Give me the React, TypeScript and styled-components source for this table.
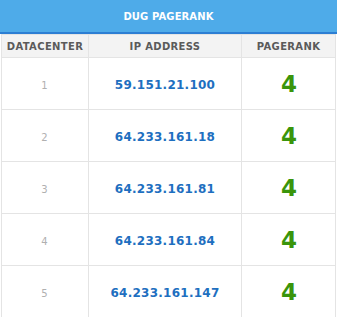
import React from "react";
import styled, { createGlobalStyle } from "styled-components";

const Global = createGlobalStyle`
  html, body { margin: 0; padding: 0; background: #ffffff; }
  body { font-family: "DejaVu Sans", Verdana, sans-serif; }
`;

const Wrap = styled.div`
  width: 337px;
  display: flex;
  flex-direction: column;
`;

const Title = styled.div`
  height: 32px;
  line-height: 33px;
  background: #4eabe9;
  border-bottom: 2px solid #2c7ed3;
  color: #ffffff;
  font-weight: bold;
  font-size: 10px;
  letter-spacing: 0.1px;
  text-align: center;
`;

const Grid = styled.div`
  margin-left: 1px;
  width: 333px;
  display: grid;
  grid-template-columns: 86px 152px 93px;
  grid-auto-rows: 51px;
  grid-template-rows: 22px;
  gap: 1px;
  background: #e4e4e4;
  padding: 1px;
`;

const HeadCell = styled.div`
  background: #f3f3f3;
  color: #5a5a5a;
  font-weight: bold;
  font-size: 10px;
  letter-spacing: 0.35px;
  display: flex;
  align-items: center;
  justify-content: center;
  padding-top: 1px;
`;

const Cell = styled.div`
  background: #ffffff;
  display: flex;
  align-items: center;
  justify-content: center;
`;

const Num = styled.span`
  color: #b0b0b0;
  font-size: 10px;
  padding-top: 3px;
  padding-right: 1px;
`;

const Ip = styled.span`
  color: #1e6fc0;
  font-weight: bold;
  font-size: 12px;
  letter-spacing: 0.25px;
  padding-top: 2px;
`;

const Rank = styled.span`
  color: #3a950b;
  font-weight: bold;
  font-size: 23px;
  padding-top: 1px;
  padding-left: 1px;
`;

const rows = [
  { dc: "1", ip: "59.151.21.100", pr: "4" },
  { dc: "2", ip: "64.233.161.18", pr: "4" },
  { dc: "3", ip: "64.233.161.81", pr: "4" },
  { dc: "4", ip: "64.233.161.84", pr: "4" },
  { dc: "5", ip: "64.233.161.147", pr: "4" },
];

export default function App() {
  return (
    <Wrap>
      <Global />
      <Title>DUG PAGERANK</Title>
      <Grid>
        <HeadCell>DATACENTER</HeadCell>
        <HeadCell>IP ADDRESS</HeadCell>
        <HeadCell>PAGERANK</HeadCell>
        {rows.map((r) => (
          <React.Fragment key={r.dc}>
            <Cell>
              <Num>{r.dc}</Num>
            </Cell>
            <Cell>
              <Ip>{r.ip}</Ip>
            </Cell>
            <Cell>
              <Rank>{r.pr}</Rank>
            </Cell>
          </React.Fragment>
        ))}
      </Grid>
    </Wrap>
  );
}
